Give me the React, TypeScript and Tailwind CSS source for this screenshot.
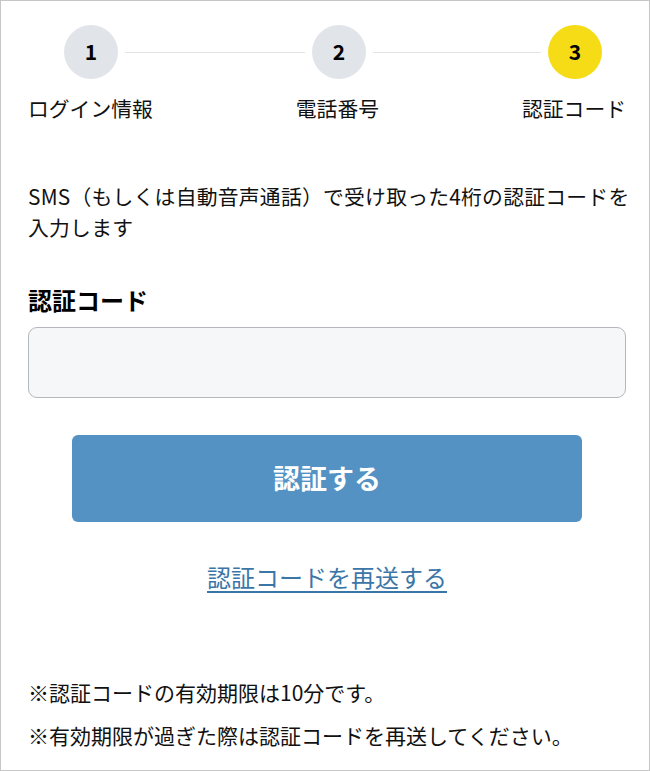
const FONT = "font-['Noto_Sans_CJK_JP','Noto_Sans',sans-serif]";

function StepCircle({ num, active }: { num: string; active?: boolean }) {
  return (
    <div
      className={`flex h-[54px] w-[54px] shrink-0 items-center justify-center rounded-full text-[21px] font-bold text-black ${
        active ? "bg-[#f6dc17]" : "bg-[#e1e5e9]"
      }`}
    >
      {num}
    </div>
  );
}

function Stepper() {
  return (
    <div>
      <div className="flex items-center pl-[36px] pr-[24px]">
        <StepCircle num="1" />
        <div className="mx-[7px] h-px grow-[181] basis-0 bg-[#e2e4e7]" />
        <StepCircle num="2" />
        <div className="mx-[7px] h-px grow-[169] basis-0 bg-[#e2e4e7]" />
        <StepCircle num="3" active />
      </div>
      <div className="mt-[14px] flex justify-between text-[20.8px] leading-[30px] text-[#111]">
        <p className="whitespace-nowrap">ログイン情報</p>
        <p className="whitespace-nowrap">電話番号</p>
        <p className="whitespace-nowrap">認証コード</p>
      </div>
    </div>
  );
}

export default function App() {
  return (
    <div
      className={`${FONT} h-[771px] w-[650px] overflow-hidden border border-[#c6c6c6] bg-white pl-[27px] pr-[23px] pt-[24px] text-[#111]`}
    >
      <Stepper />

      <p className="mt-[58px] text-[20.8px] leading-[31px] tracking-[0.25px]">
        <span className="block whitespace-nowrap">
          SMS（もしくは自動音声通話）で受け取った4桁の認証コードを
        </span>
        <span className="block">入力します</span>
      </p>

      <label className="mt-[40px] block text-[24px] font-bold leading-[34px] text-black">
        認証コード
      </label>
      <input
        type="text"
        inputMode="numeric"
        className="mt-[10px] block h-[71px] w-full rounded-[9px] border-[1.5px] border-[#b4b8be] bg-[#f6f7f9] px-4 text-[20px] outline-none"
      />

      <div className="mt-[37px] flex justify-center">
        <button
          type="button"
          className="h-[87px] w-[510px] rounded-[6px] bg-[#5492c4] text-[27px] font-bold text-white"
        >
          認証する
        </button>
      </div>

      <div className="mt-[38px] flex justify-center">
        <a
          href="#"
          className="text-[24px] leading-[34px] text-[#3b76a8] underline decoration-[1.5px] underline-offset-[4px]"
        >
          認証コードを再送する
        </a>
      </div>

      <div className="mt-[77px] text-[21px] leading-[43px]">
        <p>※認証コードの有効期限は10分です。</p>
        <p>※有効期限が過ぎた際は認証コードを再送してください。</p>
      </div>
    </div>
  );
}
